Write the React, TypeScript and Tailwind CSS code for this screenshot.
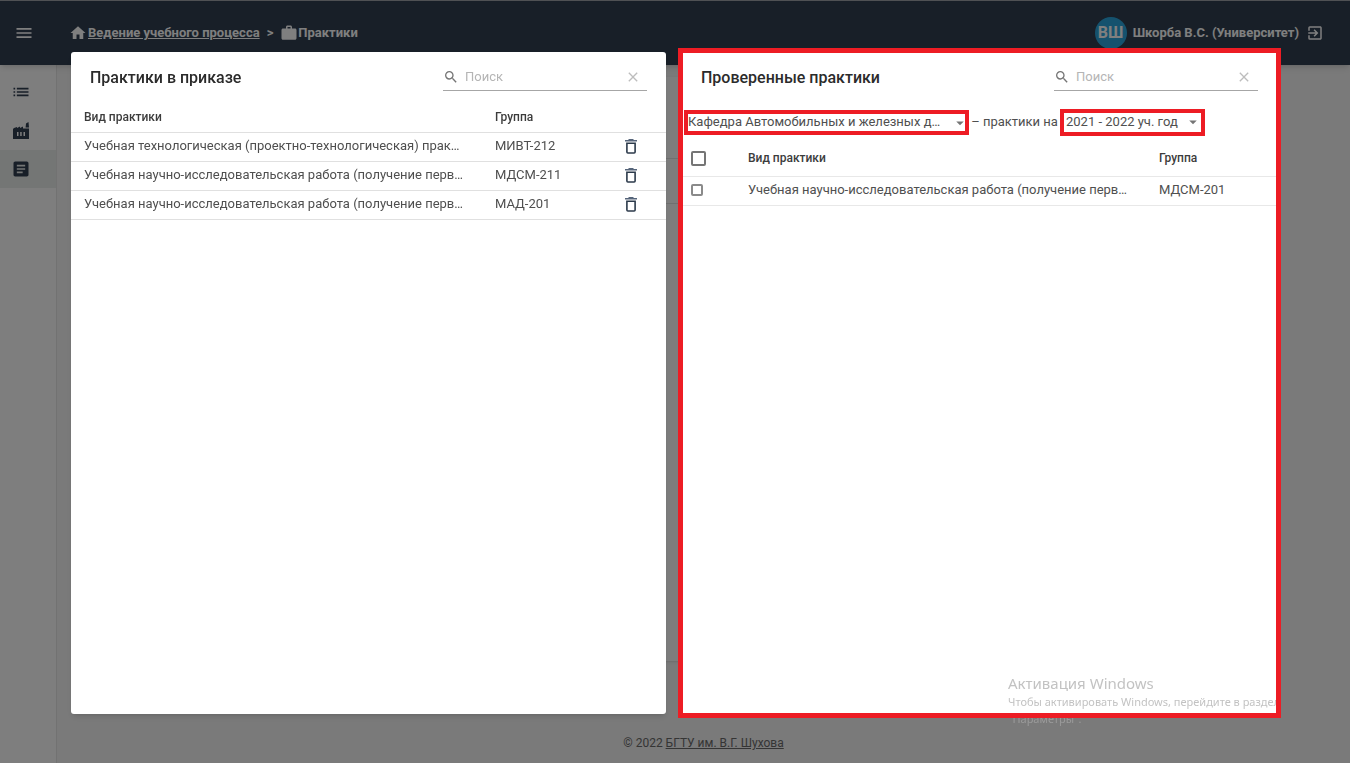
import React from 'react'
import {
  MdArrowDropDown,
  MdArticle,
  MdClose,
  MdExitToApp,
  MdHome,
  MdList,
  MdMenu,
  MdSearch,
  MdWork,
} from 'react-icons/md'

const orderRows = [
  { id: 1, name: 'Учебная технологическая (проектно-технологическая) прак…', group: 'МИВТ-212' },
  { id: 2, name: 'Учебная научно-исследовательская работа (получение перв…', group: 'МДСМ-211' },
  { id: 3, name: 'Учебная научно-исследовательская работа (получение перв…', group: 'МАД-201' },
]

const checkedRows = [
  { id: 1, name: 'Учебная научно-исследовательская работа (получение перв…', group: 'МДСМ-201' },
]

function FactoryIcon() {
  return (
    <svg viewBox="0 0 16 17" className="h-[17px] w-4" fill="currentColor" aria-hidden="true">
      <path
        fillRule="evenodd"
        d="M0 7 1 6 4 5v1l3-1.5V6l3-1.5v2h6V17H0ZM4 10v4h1.5v-4Zm3.2 0v4h1.5v-4Zm3.3 0v4H12v-4Z"
      />
      <path d="M12.6 5.5 13 1.5 15.5 0 16 5.5Z" />
    </svg>
  )
}

function TrashIcon() {
  return (
    <svg viewBox="0 0 12 15" className="h-[15px] w-3" fill="none" aria-hidden="true">
      <path d="M0 1.8h12M3.5.8h5" stroke="#56657a" strokeWidth="1.6" />
      <path d="M1.9 4.2h8.2v8.8a1 1 0 0 1-1 1H2.9a1 1 0 0 1-1-1Z" stroke="#2c3a4b" strokeWidth="1.6" />
    </svg>
  )
}

function Search({ id }: { id: string }) {
  return (
    <div className="flex h-7 w-[204px] items-center border-b border-[#a6a6a6]">
      <label htmlFor={id} aria-label="Поиск">
        <MdSearch className="h-4 w-4 text-[#757575]" />
      </label>
      <input
        id={id}
        type="text"
        placeholder="Поиск"
        className="ml-1.5 min-w-0 flex-1 bg-transparent text-[13px] outline-none placeholder:text-[#b5b5b5]"
      />
      <button type="button" aria-label="Очистить" className="mr-1.5">
        <MdClose className="h-4 w-4 text-[#bdbdbd]" />
      </button>
    </div>
  )
}

function PanelHead({ title, searchId }: { title: string; searchId: string }) {
  return (
    <div className="flex h-12 items-center justify-between px-[19px] pt-0.5">
      <h2 className="pt-0.5 text-base font-medium text-[#2b2b2b]">{title}</h2>
      <Search id={searchId} />
    </div>
  )
}

function Header() {
  return (
    <header className="relative z-10 flex h-[65px] items-center border-t border-[#9ea3a8] bg-[#303e50] px-4 text-[13px] font-bold text-white shadow-md">
      <button type="button" aria-label="Меню" className="mr-[39px]">
        <MdMenu className="-ml-0.5 h-5 w-5" />
      </button>
      <nav className="-ml-1 flex items-center">
        <MdHome className="mr-px h-[18px] w-[18px]" />
        <a href="#" className="underline">Ведение учебного процесса</a>
        <span className="mx-[7px]">&gt;</span>
        <MdWork className="h-[18px] w-[18px]" />
        <span>Практики</span>
      </nav>
      <div className="ml-auto mr-2.5 flex items-center">
        <span className="mr-1.5 flex h-8 w-8 items-center justify-center rounded-full bg-[#2aa5dc] text-base">ВШ</span>
        <span>Шкорба В.С. (Университет)</span>
        <button type="button" aria-label="Выйти" className="ml-[7px]">
          <MdExitToApp className="h-[18px] w-[18px]" />
        </button>
      </div>
    </header>
  )
}

function Sidebar() {
  return (
    <nav className="flex w-[57px] flex-col border-r border-[#e4e4e4] bg-[#fdfdfd] pt-[7px] text-[#303e50]">
      <a href="#" aria-label="Список" className="flex h-[39px] items-center pl-[11px]">
        <MdList className="h-5 w-5" />
      </a>
      <a href="#" aria-label="Предприятия" className="flex h-[39px] items-center pl-[13px]">
        <FactoryIcon />
      </a>
      <a href="#" aria-label="Практики" className="flex h-[38px] items-center bg-[#e9eceb] pl-[11px]">
        <MdArticle className="h-5 w-5" />
      </a>
    </nav>
  )
}

function OrderPanel() {
  return (
    <section className="min-w-0 flex-1 rounded-[3px] bg-white shadow-md">
      <PanelHead title="Практики в приказе" searchId="search-order" />
      <table className="w-full table-fixed text-left text-[13px] text-[#4f4f4f]">
        <thead>
          <tr className="h-8 border-b border-[#e0e0e0] text-xs text-[#3c3c3c]">
            <th className="pl-[13px] pt-0.5 font-medium">Вид практики</th>
            <th className="w-[115px] pt-0.5 font-medium">Группа</th>
            <th className="w-14" />
          </tr>
        </thead>
        <tbody>
          {orderRows.map((row) => (
            <tr key={row.id} className="h-[29px] border-b border-[#e0e0e0] leading-5">
              <td className="truncate pb-0.5 pl-[13px]">{row.name}</td>
              <td className="pb-0.5">{row.group}</td>
              <td>
                <button type="button" aria-label="Удалить" className="ml-[15px] block">
                  <TrashIcon />
                </button>
              </td>
            </tr>
          ))}
        </tbody>
      </table>
    </section>
  )
}

function CheckedPanel() {
  return (
    <section className="relative min-w-0 flex-1 bg-white">
      <PanelHead title="Проверенные практики" searchId="search-checked" />
      <div className="flex h-[42px] items-center pl-0.5 pt-[3px] text-[13px] text-[#4f4f4f]">
        <div className="relative h-[25px] w-[285px] border-4 border-[#ed1c24]">
          <select
            aria-label="Кафедра"
            className="block h-4 w-full appearance-none truncate pr-5 leading-4 outline-none"
          >
            <option>Кафедра Автомобильных и железных дорог</option>
          </select>
          <MdArrowDropDown className="pointer-events-none absolute -right-1 top-0 h-[18px] w-[18px] text-[#757575]" />
        </div>
        <span className="w-[91px] pb-0.5 text-center">– практики на</span>
        <div className="relative h-[27px] w-[145px] border-4 border-[#ed1c24]">
          <select
            aria-label="Учебный год"
            className="block h-[18px] w-full appearance-none truncate pl-0.5 leading-[18px] outline-none"
          >
            <option>2021 - 2022 уч. год</option>
          </select>
          <MdArrowDropDown className="pointer-events-none absolute -right-px top-0 h-[18px] w-[18px] text-[#757575]" />
        </div>
      </div>
      <table className="w-full table-fixed text-left text-[13px] text-[#4f4f4f]">
        <thead>
          <tr className="h-[34px] border-b border-[#e8e8e8] text-xs text-[#3c3c3c]">
            <th className="w-[66px] pl-[9px]">
              <input
                type="checkbox"
                aria-label="Выбрать все"
                className="block h-[15px] w-[15px] appearance-none rounded-[2px] border-2 border-[#757575]"
              />
            </th>
            <th className="pb-0.5 font-medium">Вид практики</th>
            <th className="w-[118px] pb-0.5 font-medium">Группа</th>
          </tr>
        </thead>
        <tbody>
          {checkedRows.map((row) => (
            <tr key={row.id} className="h-[29px] border-b border-[#e8e8e8] leading-5">
              <td className="pb-0.5 pl-[9px]">
                <input
                  type="checkbox"
                  aria-label={row.name}
                  className="block h-3 w-3 appearance-none rounded-[2px] border-2 border-[#8a8a8a]"
                />
              </td>
              <td className="truncate pb-0.5">{row.name}</td>
              <td className="pb-0.5">{row.group}</td>
            </tr>
          ))}
        </tbody>
      </table>
    </section>
  )
}

export default function App() {
  return (
    <div className="font-[Roboto,sans-serif]">
      <div className="flex min-h-screen flex-col bg-[#f4f4f4]">
        <Header />
        <div className="flex flex-1">
          <Sidebar />
          <div className="flex flex-1 flex-col">
            <main className="ml-6 mr-[72px] mt-3 flex flex-1 flex-col rounded bg-[#fbfbfb] shadow">
              <div className="h-[82px] border-b border-[#dedede]" />
              <div className="h-[45px] border-b border-[#dedede]" />
            </main>
            <footer className="flex h-[102px] items-end justify-center pb-3 text-xs text-[#6b6b6b]">
              <p>
                © 2022 <a href="#" className="underline">БГТУ им. В.Г. Шухова</a>
              </p>
            </footer>
          </div>
        </div>
      </div>

      {/* dialog */}
      <div className="fixed inset-0 z-20 flex gap-4 bg-black/50 pb-[49px] pl-[71px] pr-[73px] pt-[52px]">
        <OrderPanel />
        <div className="relative flex min-w-0 flex-1">
          <CheckedPanel />
          {/* highlight frame */}
          <div className="pointer-events-none absolute -inset-1 z-20 border-5 border-[#ed1c24]" />
        </div>
        {/* system watermark, runs under the frame */}
        <div className="pointer-events-none absolute bottom-[36px] right-[42px] z-10 w-[300px] font-['Noto_Sans',sans-serif] text-[11px] leading-[17px] text-[#a8a8a8]/70">
          <p className="text-[15px] leading-5">Активация Windows</p>
          <p>Чтобы активировать Windows, перейдите в раздел</p>
          <p>"Параметры".</p>
        </div>
      </div>
    </div>
  )
}
